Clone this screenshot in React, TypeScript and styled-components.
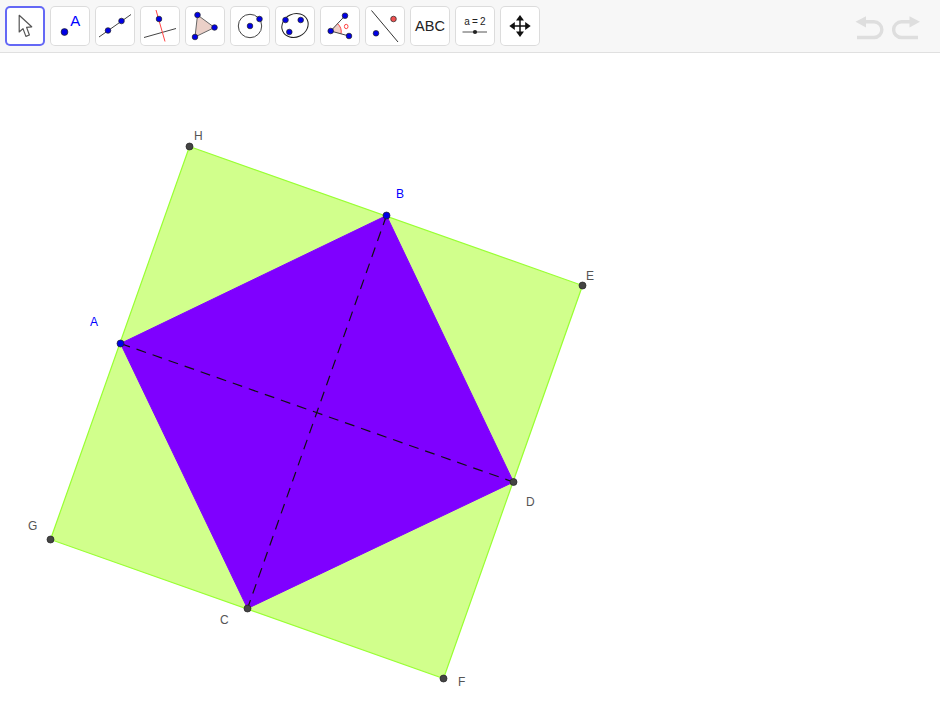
import { FC, ReactNode } from "react";
import styled, { createGlobalStyle } from "styled-components";

const BLUE = "#0000e6";

const GlobalStyle = createGlobalStyle`
  html, body {
    margin: 0;
    padding: 0;
    background: #fff;
    font-family: "Liberation Sans", Arial, sans-serif;
  }
`;

const Page = styled.div`
  width: 940px;
  height: 727px;
  overflow: hidden;
  display: flex;
  flex-direction: column;
`;
const Toolbar = styled.div`
  height: 52px;
  flex: none;
  display: flex;
  align-items: center;
  justify-content: space-between;
  padding: 0 0 0 5px;
  background: #f7f7f7;
  border-bottom: 1px solid #e0e0e0;
`;
const ToolGroup = styled.div`
  display: flex;
  gap: 5px;
`;
const ToolButton = styled.div<{ $active?: boolean }>`
  width: 40px;
  height: 40px;
  background: #fff;
  border-radius: 5px;
  box-shadow: inset 0 0 0 ${(p) => (p.$active ? "2px #6468f5" : "1px #dcdcdc")};
  svg {
    display: block;
  }
`;
const History = styled.div`
  display: flex;
  align-items: center;
  gap: 3px;
  padding: 3px 18px 0 0;
`;
const Canvas = styled.div`
  flex: 1;
  background: #fff;
  svg {
    display: block;
  }
`;
const DashedLine = styled.line`
  stroke: #111;
  stroke-width: 1.2;
  stroke-dasharray: 10 7;
`;
const PointLabel = styled.text<{ $blue?: boolean }>`
  font-size: 12px;
  fill: ${(p) => (p.$blue ? "#0000ff" : "#555")};
`;
const ToolText = styled.text<{ $size: number }>`
  font-size: ${(p) => p.$size}px;
  word-spacing: -0.6px;
  text-anchor: middle;
  fill: #222;
`;
const AccentLetter = styled.text`
  font-size: 15px;
  fill: #0000ff;
`;

const Pt: FC<{ x: number; y: number; fill?: string; r?: number }> = ({ x, y, fill = BLUE, r = 2.8 }) => (
  <circle cx={x} cy={y} r={r} fill={fill} stroke="#222" strokeWidth={0.7} />
);

// every icon is drawn in the 40x40 box of its button
const tools: ReactNode[] = [
  <path
    key="move"
    d="M14.2 9.3 V26 L18 22.6 L20.9 30.4 L24.4 29 L21.6 21.4 L26.7 20.8 Z"
    fill="#fff"
    stroke="#555"
    strokeWidth={1.2}
    strokeLinejoin="round"
  />,
  <g key="point">
    <Pt x={14.5} y={26} r={3.4} />
    <AccentLetter x={20.3} y={20}>A</AccentLetter>
  </g>,
  <g key="line">
    <line x1={4} y1={31} x2={36} y2={8.5} stroke="#444" />
    <Pt x={13} y={24.5} />
    <Pt x={26.5} y={15} />
  </g>,
  <g key="perp">
    <line x1={4} y1={31.5} x2={36} y2={22.5} stroke="#444" />
    <line x1={16} y1={4} x2={25} y2={35.5} stroke="#f44" />
    <Pt x={19} y={13} />
  </g>,
  <g key="polygon">
    <polygon points="12.5,9 29.5,21.5 10,31" fill="#ebd0c8" stroke="#666" />
    <Pt x={12.5} y={9} />
    <Pt x={29.5} y={21.5} />
    <Pt x={10} y={31} />
  </g>,
  <g key="circle">
    <circle cx={20} cy={20} r={11.7} fill="none" stroke="#444" />
    <Pt x={20} y={20} />
    <Pt x={29.5} y={13} />
  </g>,
  <g key="conic">
    <ellipse cx={20} cy={19.5} rx={13.5} ry={11.5} transform="rotate(-25 20 19.5)" fill="none" stroke="#222" />
    <Pt x={10.5} y={14} />
    <Pt x={25.7} y={14} />
    <Pt x={14.3} y={26} />
  </g>,
  <g key="angle">
    <path d="M10.7 25 L17.5 17.6 A11 11 0 0 1 21 28 Z" fill="#f0cfc8" />
    <path d="M17.5 17.6 A11 11 0 0 1 21 28" fill="none" stroke="#f44" />
    <line x1={10.7} y1={25} x2={25} y2={9.7} stroke="#444" />
    <line x1={10.7} y1={25} x2={29} y2={30} stroke="#444" />
    <ellipse cx={26.2} cy={20.5} rx={1.8} ry={2.2} fill="none" stroke="#f44" strokeWidth={1} />
    <Pt x={10.7} y={25} />
    <Pt x={25} y={9.7} />
    <Pt x={29} y={30} />
  </g>,
  <g key="reflect">
    <line x1={6.5} y1={4.5} x2={33} y2={36} stroke="#333" />
    <Pt x={11} y={27.3} />
    <Pt x={28.5} y={13} fill="#f05050" />
  </g>,
  <ToolText key="abc" x={20} y={25.3} $size={14.5}>ABC</ToolText>,
  <g key="slider">
    <ToolText x={20} y={19} $size={10}>a = 2</ToolText>
    <line x1={7.5} y1={26} x2={32} y2={26} stroke="#555" />
    <circle cx={20} cy={26} r={2.1} fill="#222" />
  </g>,
  <g key="translate" fill="#111">
    <line x1={20} y1={12} x2={20} y2={28} stroke="#111" strokeWidth={1.5} />
    <line x1={12} y1={20} x2={28} y2={20} stroke="#111" strokeWidth={1.5} />
    <polygon points="20,9 16,14.5 24,14.5" />
    <polygon points="20,31 16,25.5 24,25.5" />
    <polygon points="9.3,20 14.8,16 14.8,24" />
    <polygon points="30.7,20 25.2,16 25.2,24" />
  </g>,
];

const outer = { H: [189.5, 146.5], E: [582.5, 285.5], F: [443.5, 678.5], G: [50.5, 539.5] };
const inner = { A: [120.5, 343.5], B: [386.5, 215.5], D: [513.5, 482], C: [247.5, 608.5] };

const labels = [
  { text: "H", x: 194, y: 140, blue: false },
  { text: "B", x: 396, y: 198, blue: true },
  { text: "E", x: 586, y: 280, blue: false },
  { text: "A", x: 90, y: 326, blue: true },
  { text: "D", x: 526, y: 506, blue: false },
  { text: "G", x: 28, y: 530, blue: false },
  { text: "C", x: 220, y: 624, blue: false },
  { text: "F", x: 458, y: 686, blue: false },
];

const pointList = (pts: Record<string, number[]>) =>
  Object.values(pts)
    .map((p) => p.join(","))
    .join(" ");

const App: FC = () => (
  <Page>
    <GlobalStyle />
    <Toolbar>
      <ToolGroup>
        {tools.map((icon, i) => (
          <ToolButton key={i} $active={i === 0}>
            <svg width={40} height={40} viewBox="0 0 40 40">
              {icon}
            </svg>
          </ToolButton>
        ))}
      </ToolGroup>
      <History>
        <svg width={34} height={24} viewBox="0 0 34 24">
          <path d="M10 5.8 H19 A7.85 7.85 0 0 1 19 21.5 H2" fill="none" stroke="#dedede" strokeWidth={3.4} />
          <polygon points="0.5,5.8 11,0.2 11,11.4" fill="#dedede" />
        </svg>
        <svg width={30} height={24} viewBox="0 0 30 24">
          <path d="M20 5.8 H9.5 A7.85 7.85 0 0 0 9.5 21.5 H26" fill="none" stroke="#dedede" strokeWidth={3.4} />
          <polygon points="28,5.8 17.5,0.2 17.5,11.4" fill="#dedede" />
        </svg>
      </History>
    </Toolbar>
    <Canvas>
      <svg width={940} height={674} viewBox="0 53 940 674">
        <polygon points={pointList(outer)} fill="#d1ff8c" stroke="#99ff33" strokeWidth={1.2} />
        <polygon points={pointList(inner)} fill="#7f00ff" stroke="#7f00ff" strokeWidth={1} />
        <DashedLine x1={120.5} y1={343.5} x2={513.5} y2={482} />
        <DashedLine x1={386.5} y1={215.5} x2={247.5} y2={608.5} />
        {Object.values(outer).map(([x, y]) => (
          <Pt key={`${x}-${y}`} x={x} y={y} fill="#444" r={3.5} />
        ))}
        <Pt x={120.5} y={343.5} r={3.5} />
        <Pt x={386.5} y={215.5} r={3.5} />
        <Pt x={513.5} y={482} fill="#444" r={3.5} />
        <Pt x={247.5} y={608.5} fill="#444" r={3.5} />
        {labels.map((l) => (
          <PointLabel key={l.text} x={l.x} y={l.y} $blue={l.blue}>
            {l.text}
          </PointLabel>
        ))}
      </svg>
    </Canvas>
  </Page>
);
export default App;
